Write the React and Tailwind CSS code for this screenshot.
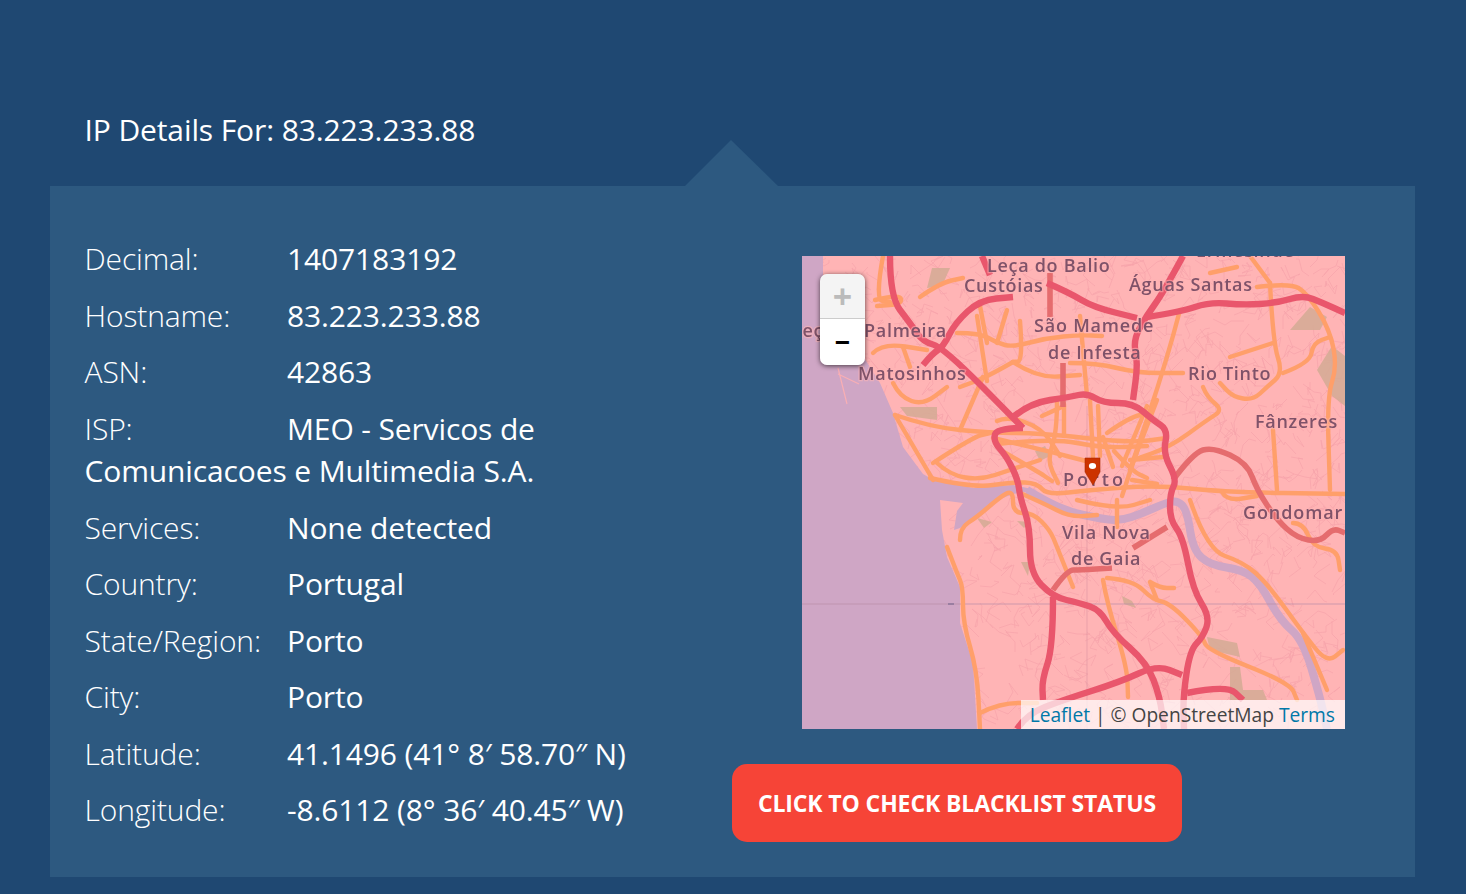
import React from "react";

const rows = [
  ["Decimal:", "1407183192"],
  ["Hostname:", "83.223.233.88"],
  ["ASN:", "42863"],
  ["ISP:", "MEO - Servicos de Comunicacoes e Multimedia S.A."],
  ["Services:", "None detected"],
  ["Country:", "Portugal"],
  ["State/Region:", "Porto"],
  ["City:", "Porto"],
  ["Latitude:", "41.1496 (41° 8′ 58.70″ N)"],
  ["Longitude:", "-8.6112 (8° 36′ 40.45″ W)"],
];

// Map drawing, coordinates are local to the 543x473 tile area
const sea =
  "M0 0 L21 0 L21 27 L18 61 L61 100 L78 127 L91 157 L101 191 L121 218 L128 222 L171 232 L211 229 L235 234 L211 238 L198 243 L175 263 L158 272 L152 274 L155 255 L161 247 L138 244 L140 274 L145 301 L158 331 L158 367 L171 407 L175 473 L0 473 Z";

const river =
  "M225 234 L245 246 L268 256 L295 262 L318 265 L341 257 L361 248 L375 244 L385 254 L391 294 L408 309 L441 314 L458 327 L478 364 L501 384 L518 441 L525 473";

const patches = [
  "M488 74 L508 51 L525 61 L518 74 Z",
  "M515 114 L530 90 L543 100 L543 150 L530 140 Z",
  "M405 381 L435 387 L438 401 L408 394 Z",
  "M428 411 L438 411 L441 434 L461 434 L465 444 L428 444 Z",
  "M98 151 L135 151 L135 164 L105 160 Z",
  "M175 262 L190 266 L182 272 Z",
  "M215 265 L228 266 L222 272 Z",
  "M219 306 L228 306 L226 320 Z",
  "M320 340 L330 345 L334 352 L322 348 Z",
  "M130 12 L148 12 L140 30 L125 32 Z",
  "M233 195 L243 190 L248 200 L238 205 Z",
];

const orange = [
  "M81 0 L73 44 L88 46",
  "M118 41 L138 27 L161 22",
  "M211 106 L185 121 L158 131",
  "M91 127 L98 141 L121 149 L145 131",
  "M93 159 L128 171 L188 177 L238 177 L328 187 L365 182",
  "M93 159 L131 224",
  "M131 207 L171 181 L188 177",
  "M181 121 L158 174",
  "M155 77 L178 77 L195 87 L211 91 L245 82 L278 79 L300 80",
  "M195 87 L205 54",
  "M218 65 L221 105 L211 106",
  "M178 50 L185 87",
  "M71 97 L81 87 L125 94",
  "M101 91 L108 111",
  "M73 44 L98 38 L100 48 L75 50",
  "M175 60 L185 125",
  "M211 106 L235 122 L278 119",
  "M268 107 L295 107 L335 117 L381 117",
  "M378 54 L365 104 L328 214",
  "M468 27 L471 87 L481 117 L465 131 L451 144 L431 141 L418 127",
  "M428 101 L471 87",
  "M481 117 L508 107 L511 87 L528 81",
  "M455 31 L488 27 L505 37 L528 74 L535 111 L525 141 L528 234",
  "M471 174 L475 234",
  "M401 131 L405 141 L421 154 L405 164 L368 191 L331 204",
  "M448 0 L468 27",
  "M408 17 L435 11",
  "M388 244 L405 294 L441 306 L465 327 L501 377 L525 407 L541 394",
  "M501 377 L525 434",
  "M305 322 L331 324 L351 344 L368 347 L401 381 L405 394 L488 427 L495 444",
  "M301 324 L305 347 L325 411 L326 441",
  "M348 326 L355 344 M348 326 L358 332 L372 332",
  "M158 284 L158 272 L175 261 L198 241 L211 234 L211 257 L231 257 L248 274 L255 291 L271 331",
  "M145 291 L155 317 L161 331 L161 367 L175 414 L178 473",
  "M178 457 L198 447 L235 447",
  "M491 267 L501 267 L511 291 L535 294 L538 314",
  // Porto centre
  "M191 182 L241 194 L288 206",
  "M195 188 L250 182 L300 192 L345 190",
  "M135 207 L148 219 L178 224 L208 214 L238 204",
  "M128 222 L171 232 L211 226 L235 227 L245 239 L288 234 L355 229 L420 236 L543 238",
  "M255 144 L255 177 L245 204 L256 227",
  "M262 148 L262 180",
  "M288 144 L291 201",
  "M296 150 L298 200",
  "M301 181 L311 211",
  "M355 144 L328 214",
  "M345 150 L320 210",
  "M305 177 L328 161 L348 157",
  "M328 204 L361 201",
  "M312 195 L330 215 L345 222",
  "M218 237 L241 247 L268 261 L295 259",
  "M275 244 L315 254 L348 244",
  "M315 244 L315 271",
  "M195 165 L205 160 L240 172 L258 200",
  "M240 160 L262 150",
  "M278 60 L285 140",
  "M420 236 L425 245 L455 240",
  "M330 224 L355 228",
  "M340 180 L320 240",
  "M200 195 L235 215 L250 225",
];

const red = [
  "M88 0 L88 41 L108 67 L121 86 L141 91 L221 172",
  "M121 109 L131 97 L141 91 L153 67 L178 44 L211 41",
  "M180 0 L188 19",
  "M245 27 L268 37 L291 51 L335 62",
  "M345 61 L378 56 L408 46 L441 49 L475 47 L501 39 L521 47 L543 57",
  "M381 0 L361 37 L345 59 L331 84 L336 107 L331 144",
  "M211 161 L228 147 L268 141 L285 137 L301 147 L331 147 L351 164 L366 174 L361 197 L375 224 L368 237 L368 264 L381 281 L391 334 L408 361 L401 381 L388 394 L381 441 L382 473",
  "M221 172 L195 172 L191 185 L205 201 L216 224 L218 241 L228 271 L228 317 L251 341 L278 347 L298 354 L311 377 L345 407 L358 441 L362 473",
  "M251 341 L251 391 L240 424 L241 444",
  "M215 473 L225 458 L261 444 L318 426 L355 409 L380 419",
  "M385 437 L425 429 L441 444",
];

const trunk = [
  "M251 334 L265 314 L278 314 L310 312",
  "M331 292 L365 271",
  "M371 224 L391 197 L411 191 L445 207 L455 234 L475 264 L495 282 L518 286 L531 272 L543 277",
  "M261 107 L261 151",
  "M248 17 L248 61",
];

const labels = [
  ["Leça do Balio", 185, 16, "tracking-[0.7px]"],
  ["Custóias", 162, 36, "tracking-[0.7px]"],
  ["Ermesinde", 394, 1, "tracking-[0.7px]"],
  ["Águas Santas", 327, 35, "tracking-[0.7px]"],
  ["Leça", -10, 81, "tracking-[0.7px]"],
  ["Palmeira", 62, 81, "tracking-[0.7px]"],
  ["São Mamede", 232, 76, "tracking-[0.8px]"],
  ["de Infesta", 246, 103, "tracking-[0.7px]"],
  ["Matosinhos", 56, 124, "tracking-[0.7px]"],
  ["Rio Tinto", 386, 124, "tracking-[0.7px]"],
  ["Fânzeres", 453, 172, "tracking-[0.7px]"],
  ["Porto", 261, 230, "tracking-[3px]"],
  ["Gondomar", 441, 263, "tracking-[0.9px]"],
  ["Vila Nova", 260, 283, "tracking-[0.8px]"],
  ["de Gaia", 269, 309, "tracking-[0.7px]"],
];

// Turn the hand-picked road points into curves through the segment midpoints
const smooth = (d) =>
  d
    .split("M")
    .filter(Boolean)
    .map((seg) => {
      const pts = seg
        .trim()
        .split(/\s*L\s*/)
        .map((p) => p.split(" ").map(Number));
      let out = `M${pts[0][0]} ${pts[0][1]}`;
      for (let i = 1; i < pts.length - 1; i++) {
        const mx = (pts[i][0] + pts[i + 1][0]) / 2;
        const my = (pts[i][1] + pts[i + 1][1]) / 2;
        out += ` Q${pts[i][0]} ${pts[i][1]} ${mx} ${my}`;
      }
      const last = pts[pts.length - 1];
      return `${out} L${last[0]} ${last[1]}`;
    })
    .join(" ");

// Fine street mesh, seeded so the picture is the same on every load
const streets = (() => {
  let seed = 42;
  const rnd = () => {
    seed = (seed * 16807) % 2147483647;
    return seed / 2147483647;
  };
  let d = "";
  for (let i = 0; i < 1100; i++) {
    let x = rnd() * 543;
    let y = rnd() * 473;
    d += `M${x.toFixed(0)} ${y.toFixed(0)}`;
    for (let j = 0; j < 3; j++) {
      x += (rnd() - 0.5) * 26;
      y += (rnd() - 0.5) * 26;
      d += ` L${x.toFixed(0)} ${y.toFixed(0)}`;
    }
  }
  return d;
})();

const MapDrawing = () => (
  <svg viewBox="0 0 543 473" className="block w-[543px] h-[473px] blur-[0.6px]">
    <rect width="543" height="473" fill="#ffb4b5" />
    <path d={streets} fill="none" stroke="#f7a4aa" strokeWidth="0.7" />
    <path d={sea} fill="#cfa6c5" />
    <path d="M36 112 L45 148 M36 118 L57 128" fill="none" stroke="#f9aeb4" strokeWidth="1.2" />
    <path d={smooth(river)} fill="none" stroke="#cfa6c5" strokeWidth="8" />
    {patches.map((d) => (
      <path key={d} d={d} fill="#d3aa94" fillOpacity="0.85" />
    ))}
    <path d="M0 348 H543" stroke="#b78da8" strokeWidth="0.7" />
    <path d="M285 150 V473" stroke="#dc95a3" strokeWidth="0.6" />
    <path d="M146 348 H152" stroke="#7c6a92" strokeWidth="1.2" />
    {orange.map((d) => (
      <path key={d} d={smooth(d)} fill="none" stroke="#ff9f6a" strokeWidth="4.4" strokeLinejoin="round" strokeLinecap="round" />
    ))}
    {trunk.map((d) => (
      <path key={d} d={smooth(d)} fill="none" stroke="#e56c6e" strokeWidth="5.6" strokeLinejoin="round" />
    ))}
    {red.map((d) => (
      <path key={d} d={smooth(d)} fill="none" stroke="#e9566c" strokeWidth="6.4" strokeLinejoin="round" />
    ))}
    {labels.map(([text, x, y, spacing]) => (
      <text
        key={text}
        x={x}
        y={y}
        fill="#7f5269"
        stroke="#ffb4b5"
        strokeOpacity="0.55"
        strokeWidth="2.5"
        paintOrder="stroke"
        className={`font-['Open_Sans',sans-serif] text-[18px] font-semibold ${spacing}`}
      >
        {text}
      </text>
    ))}
    <path
      d="M283 202 H298 V216 L291 229 L283 216 Z"
      fill="#cc3300"
      stroke="#a82a00"
      strokeWidth="0.6"
    />
    <ellipse cx="290.5" cy="210" rx="3.6" ry="3" fill="#fff" />
  </svg>
);

const App = () => {
  return (
    <div className="min-h-[894px] bg-[#1f4872] font-['Open_Sans',sans-serif] text-white overflow-hidden px-[50px] pt-[109px]">
      <h1 className="text-[30px] leading-[42px] font-normal tracking-[-0.11px] pl-[34.5px] mb-[35px]">
        IP Details For: 83.223.233.88
      </h1>
      <div className="relative w-[1365px] h-[691px] bg-[#2d5980] flex">
        <div className="absolute -top-[46px] left-[635px] w-0 h-0 border-l-[46px] border-r-[47px] border-b-[46px] border-l-transparent border-r-transparent border-b-[#2d5980]" />
        <div className="w-[682px] shrink-0 pl-[34.5px] pt-[52.2px] pr-[35px]">
          {rows.map(([label, value]) => (
            <p key={label} className="text-[30px] leading-[42px] tracking-[-0.13px] mb-[14.58px]">
              <span className="inline-block w-[202.5px] font-light">{label}</span>
              {value}
            </p>
          ))}
        </div>
        <div className="pt-[70px]">
          <div className="relative ml-[70px] w-[543px] h-[473px] overflow-hidden">
            <MapDrawing />
            <div className="absolute left-[18px] top-[18px] w-[45px] h-[91px] rounded-[7px] overflow-hidden shadow-[0_1px_5px_rgba(0,0,0,0.65)]">
              <div className="h-[45px] bg-[#f4f4f4] border-b border-[#ccc] flex items-center justify-center text-[#bbb] text-[34px] leading-none font-bold">
                +
              </div>
              <div className="h-[46px] pb-[2px] bg-white flex items-center justify-center text-black text-[27px] leading-none font-bold">
                −
              </div>
            </div>
            <div className="absolute right-0 bottom-0 h-[29px] pl-[9px] pr-[10px] bg-white/70 text-[19.2px] leading-[29px] text-[#444] whitespace-nowrap">
              <span className="text-[#0078a8]">Leaflet</span> | © OpenStreetMap{" "}
              <span className="text-[#0078a8]">Terms</span>
            </div>
          </div>
          <button className="mt-[35px] w-[450px] h-[78px] rounded-[15px] bg-[#f64437] text-white text-[23px] font-bold uppercase tracking-[-0.12px]">
            Click to check blacklist status
          </button>
        </div>
      </div>
    </div>
  );
};

export default App;
